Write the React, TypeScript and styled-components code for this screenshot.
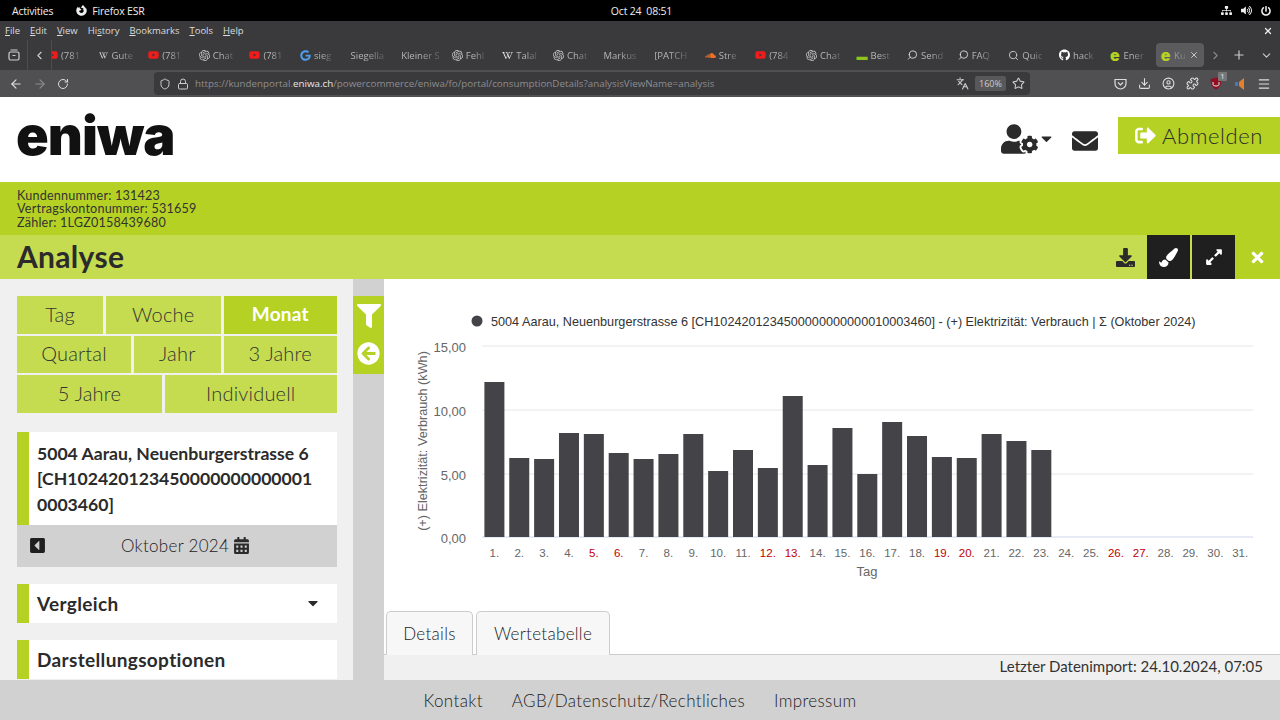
import React from 'react';
import styled, { createGlobalStyle } from 'styled-components';
import {
  FaCalendarAlt,
  FaCaretDown,
  FaCaretSquareLeft,
  FaDownload,
  FaEnvelope,
  FaExpandAlt,
  FaFilter,
  FaFirefoxBrowser,
  FaGithub,
  FaGoogle,
  FaPaintBrush,
  FaPowerOff,
  FaSignOutAlt,
  FaSitemap,
  FaSoundcloud,
  FaTimes,
  FaUserCog,
  FaArrowCircleLeft,
  FaVolumeUp,
  FaWikipediaW,
  FaYoutube,
} from 'react-icons/fa';
import { SiOpenai } from 'react-icons/si';
import {
  ArrowLeft,
  ArrowRight,
  ChevronDown,
  ChevronLeft,
  ChevronRight,
  CircleUser,
  Download,
  Languages,
  Lock,
  Menu,
  Plus,
  Puzzle,
  RotateCw,
  Search,
  Shield,
  Star,
  X,
} from 'lucide-react';

const GREEN = '#b5d224';
const LIGHT_GREEN = '#c5dc50';
const GREY = '#d1d1d1';
const PALE = '#f0f0f0';
const INK = '#2b2b2b';

const GlobalStyle = createGlobalStyle`
  html, body {
    margin: 0;
    padding: 0;
    height: 720px;
    overflow: hidden;
    background: #fff;
    font-family: "Lato", "Liberation Sans", sans-serif;
  }
  * { box-sizing: border-box; }
`;

const Screen = styled.div`
  width: 1280px;
  height: 720px;
  display: flex;
  flex-direction: column;
  overflow: hidden;
`;

/* desktop + browser chrome */
const SystemBar = styled.div`
  height: 21px;
  background: #000;
  color: #eee;
  font: 500 10.5px "Open Sans", sans-serif;
  letter-spacing: -0.2px;
  display: grid;
  grid-template-columns: 1fr auto 1fr;
  align-items: center;
  padding: 0 9px 0 12px;
`;

const SystemLeft = styled.div`
  display: flex;
  align-items: center;
`;

const FirefoxName = styled.span`
  display: flex;
  align-items: center;
  gap: 5px;
  margin-left: 23px;
`;

const SystemRight = styled.div`
  display: flex;
  justify-content: flex-end;
  align-items: center;
  gap: 9px;
`;

const MenuBar = styled.div`
  height: 19px;
  background: #3a3a3c;
  color: #ddd;
  font: 9.5px "Open Sans", sans-serif;
  display: flex;
  align-items: center;
  gap: 10px;
  padding: 0 7px 0 5px;
`;

const MenuItem = styled.span`
  u { text-underline-offset: 1px; }
`;

const MenuClose = styled.span`
  margin-left: auto;
  display: flex;
  color: #eee;
`;

const TabBar = styled.div`
  height: 30px;
  background: #3a3a3c;
  color: #b5b5b5;
  display: flex;
  align-items: center;
  font: 9.5px "Open Sans", sans-serif;
`;

const TabTool = styled.div<{ $w: number }>`
  width: ${p => p.$w}px;
  height: 100%;
  flex: none;
  display: flex;
  align-items: center;
  justify-content: center;
  color: #cfcfcf;
  border-right: 1px solid #4d4d50;
`;

// the strip is scrolled a little, so its first tab sits half under the edge
const TabStrip = styled.div`
  width: 1152px;
  flex: none;
  overflow: hidden;
  display: flex;
  align-items: center;
  height: 100%;
`;

const BrowserTab = styled.div<{ $first?: boolean }>`
  width: 50.6px;
  flex: none;
  margin-left: ${p => (p.$first ? -6 : 0)}px;
  display: flex;
  align-items: center;
  gap: 3px;
  padding-left: 1px;
  white-space: nowrap;
`;

const TabLabel = styled.span`
  -webkit-mask-image: linear-gradient(to right, #000 45%, rgba(0, 0, 0, 0.25) 100%);
  mask-image: linear-gradient(to right, #000 45%, rgba(0, 0, 0, 0.25) 100%);
`;

const ActiveTab = styled.div`
  width: 48px;
  height: 24px;
  margin-left: -3px;
  flex: none;
  border-radius: 4px;
  background: #5b5b5e;
  display: flex;
  align-items: center;
  gap: 3px;
  padding-left: 4px;
  color: #999;
`;

const ActiveClose = styled.span`
  margin-left: auto;
  margin-right: 5px;
  display: flex;
  color: #ddd;
`;

const TabRest = styled.div`
  flex: 1;
  display: flex;
  align-items: center;
  color: #ccc;
`;

const Favicon = styled.span<{ $color?: string }>`
  width: 11px;
  height: 11px;
  flex: none;
  display: flex;
  align-items: center;
  justify-content: center;
  font-size: 11px;
  color: ${p => p.$color || '#ddd'};
`;

const EFavicon = styled.span`
  font: 900 16px/11px "Inter", sans-serif;
  color: ${GREEN};
`;

const NavBar = styled.div`
  height: 27px;
  background: #505053;
  display: flex;
  align-items: center;
  color: #ddd;
  padding-left: 9px;
`;

const NavButtons = styled.div`
  width: 145px;
  flex: none;
  display: flex;
  align-items: center;
  gap: 10px;
`;

const UrlBox = styled.div`
  width: 876px;
  height: 23px;
  flex: none;
  background: #3a3a3c;
  border-radius: 4px;
  display: flex;
  align-items: center;
  padding: 0 5px 0 5px;
  gap: 6px;
  font: 9.8px "Open Sans", sans-serif;
  color: #8d8d90;
`;

const UrlText = styled.span`
  flex: 1;
  white-space: nowrap;
  b { color: #e8e8e8; font-weight: 400; }
`;

const ZoomChip = styled.span`
  width: 31px;
  height: 15px;
  background: #58585b;
  border-radius: 2px;
  font-size: 9px;
  line-height: 15px;
  text-align: center;
  color: #ccc;
`;

const NavRight = styled.div`
  flex: 1;
  display: flex;
  align-items: center;
  justify-content: flex-end;
  gap: 10px;
  padding-right: 9px;
`;

const NavSlot = styled.span`
  width: 14px;
  height: 14px;
  display: flex;
  align-items: center;
  justify-content: center;
  position: relative;
`;

const AddonBadge = styled.span`
  position: absolute;
  top: -5px;
  right: -4px;
  width: 9px;
  height: 9px;
  background: #77777a;
  border-radius: 1px;
  font: 7px/9px "Open Sans", sans-serif;
  text-align: center;
  color: #eee;
`;

/* portal page */
const Header = styled.header`
  height: 85px;
  flex: none;
  background: #fff;
  display: flex;
  align-items: center;
  padding: 0 0 8px 16px;
`;

const Logo = styled.div`
  font: 900 54px/1 "Inter", sans-serif;
  letter-spacing: -0.9px;
  color: #111;
  margin-top: 1px;
`;

const HeaderIcons = styled.div`
  margin-left: auto;
  display: flex;
  align-items: center;
  color: ${INK};
`;

const UserMenu = styled.div`
  display: flex;
  align-items: center;
  margin-right: 17px;
  margin-top: 6px;
`;

const LogoutButton = styled.div`
  width: 162px;
  height: 37px;
  margin-left: 20px;
  background: ${GREEN};
  display: flex;
  align-items: center;
  padding-left: 17px;
  gap: 6px;
  font-size: 22px;
  font-weight: 300;
  letter-spacing: 0.6px;
  color: ${INK};
  svg { color: #fff; }
`;

const CustomerBand = styled.div`
  height: 53px;
  flex: none;
  background: ${GREEN};
  padding: 6.5px 17px;
  font-size: 12.6px;
  line-height: 13.7px;
  letter-spacing: 0.2px;
  color: #333;
`;

const TitleBand = styled.div`
  height: 44px;
  flex: none;
  background: ${LIGHT_GREEN};
  display: flex;
  align-items: center;
  padding: 0 0 2px 17px;
`;

const PageTitle = styled.h1`
  margin: 0;
  font-size: 30px;
  font-weight: 700;
  letter-spacing: 0.3px;
  color: ${INK};
`;

const TitleActions = styled.div`
  margin: 0 0 -2px auto;
  height: 44px;
  display: flex;
  align-items: center;
`;

const SaveIcon = styled.span`
  display: flex;
  margin-right: 10px;
  color: ${INK};
`;

const DarkAction = styled.div`
  width: 43px;
  height: 100%;
  margin-left: 2px;
  background: #1f1f1f;
  color: #fff;
  display: flex;
  align-items: center;
  justify-content: center;
`;

const CloseAction = styled.div`
  width: 45px;
  height: 100%;
  background: ${GREEN};
  color: #fff;
  display: flex;
  align-items: center;
  justify-content: center;
`;

const Body = styled.div`
  flex: 1;
  min-height: 0;
  display: flex;
`;

const Sidebar = styled.aside`
  width: 353px;
  flex: none;
  background: ${PALE};
  padding: 17px 16px 0 17px;
  overflow: hidden;
`;

const RangeRow = styled.div`
  display: flex;
  gap: 2.5px;
  margin-bottom: 2.2px;
`;

const RangeButton = styled.div<{ $w: number; $active?: boolean }>`
  width: ${p => p.$w}px;
  height: 37.5px;
  flex: none;
  padding-bottom: 2px;
  background: ${p => (p.$active ? GREEN : LIGHT_GREEN)};
  color: ${p => (p.$active ? '#fff' : '#333')};
  font-size: ${p => (p.$active ? 19 : 20)}px;
  font-weight: ${p => (p.$active ? 700 : 300)};
  letter-spacing: 0.2px;
  display: flex;
  align-items: center;
  justify-content: center;
`;

const Card = styled.div<{ $gap: number }>`
  margin-top: ${p => p.$gap}px;
  background: #fff;
  border-left: 12px solid ${GREEN};
  display: flex;
  align-items: center;
  justify-content: space-between;
  padding: 0 16px 0 8px;
  height: 39px;
  flex: none;
  font-size: 19px;
  font-weight: 700;
  letter-spacing: 0.35px;
  color: ${INK};
`;

const AddressCard = styled.div`
  margin-top: 19px;
  height: 93px;
  background: #fff;
  border-left: 12px solid ${GREEN};
  padding: 9px 0 0 8px;
  font-size: 17.6px;
  font-weight: 700;
  line-height: 25.5px;
  color: ${INK};
`;

const DateRow = styled.div`
  height: 42px;
  background: ${GREY};
  display: flex;
  align-items: center;
  padding-left: 12px;
  font-size: 17px;
  font-weight: 300;
  letter-spacing: 0.3px;
  color: #222;
`;

const DateLabel = styled.span`
  display: flex;
  align-items: center;
  gap: 4px;
  margin-left: 75px;
`;

const Strip = styled.div`
  width: 31px;
  flex: none;
  background: ${GREY};
  padding-top: 17px;
`;

const StripBox = styled.div`
  height: 78px;
  background: ${GREEN};
  color: #fff;
  display: flex;
  flex-direction: column;
  align-items: center;
  padding-top: 8px;
  gap: 14px;
`;

const Main = styled.main`
  flex: 1;
  min-width: 0;
  display: flex;
  flex-direction: column;
  background: #fff;
`;

const ChartSvg = styled.svg`
  display: block;
  width: 896px;
  height: 332px;
  flex: none;
  font-family: "Liberation Sans", Arial, sans-serif;
`;

const DetailTabs = styled.div`
  height: 44px;
  flex: none;
  display: flex;
  gap: 3px;
  padding-left: 2px;
  border-bottom: 1px solid #ccc;
`;

const DetailTab = styled.div<{ $w: number }>`
  width: ${p => p.$w}px;
  height: 44px;
  background: #f7f7f7;
  border: 1px solid #ccc;
  border-bottom: none;
  border-radius: 5px 5px 0 0;
  display: flex;
  align-items: center;
  justify-content: center;
  font-size: 17px;
  font-weight: 300;
  letter-spacing: 0.3px;
  color: #222;
`;

const ImportLine = styled.div`
  flex: 1;
  background: ${PALE};
  display: flex;
  align-items: center;
  justify-content: flex-end;
  padding: 0 17px 3px 0;
  font-size: 15px;
  color: #333;
`;

const Footer = styled.footer`
  height: 40px;
  flex: none;
  background: ${GREY};
  display: flex;
  align-items: center;
  justify-content: center;
  gap: 29px;
  font-size: 17px;
  font-weight: 300;
  letter-spacing: 0.35px;
  color: #222;
`;

type FavKind = 'yt' | 'book' | 'chat' | 'google' | 'none' | 'wiki' | 'cloud' | 'pill' | 'q' | 'doc' | 'git' | 'e';

// labels as far as the narrow tabs show them
const browserTabs: { kind: FavKind; label: string }[] = [
  { kind: 'yt', label: '(781' },
  { kind: 'book', label: 'Gute' },
  { kind: 'yt', label: '(781' },
  { kind: 'chat', label: 'Chat' },
  { kind: 'yt', label: '(781' },
  { kind: 'google', label: 'sieg' },
  { kind: 'none', label: 'Siegella' },
  { kind: 'none', label: 'Kleiner S' },
  { kind: 'chat', label: 'Fehl' },
  { kind: 'wiki', label: 'Talal' },
  { kind: 'chat', label: 'Chat' },
  { kind: 'none', label: 'Markus' },
  { kind: 'none', label: '[PATCH' },
  { kind: 'cloud', label: 'Stre' },
  { kind: 'yt', label: '(784' },
  { kind: 'chat', label: 'Chat' },
  { kind: 'pill', label: 'Best' },
  { kind: 'q', label: 'Send' },
  { kind: 'q', label: 'FAQ' },
  { kind: 'doc', label: 'Quic' },
  { kind: 'git', label: 'hack' },
  { kind: 'e', label: 'Ener' },
];

const menuItems = [
  ['', 'F', 'ile'],
  ['', 'E', 'dit'],
  ['', 'V', 'iew'],
  ['Hi', 's', 'tory'],
  ['', 'B', 'ookmarks'],
  ['', 'T', 'ools'],
  ['', 'H', 'elp'],
];

const TabIcon: React.FC<{ kind: FavKind }> = ({ kind }) => {
  switch (kind) {
    case 'yt':
      return <Favicon $color="#f01c1c"><FaYoutube size={12} /></Favicon>;
    case 'book':
      return <Favicon $color="#eee"><FaWikipediaW size={9} /></Favicon>;
    case 'chat':
      return <Favicon $color="#c9c9c9"><SiOpenai size={11} /></Favicon>;
    case 'google':
      return <Favicon $color="#4f9df0"><FaGoogle size={11} /></Favicon>;
    case 'wiki':
      return <Favicon $color="#eee"><FaWikipediaW size={11} /></Favicon>;
    case 'cloud':
      return <Favicon $color="#f26f23"><FaSoundcloud size={13} /></Favicon>;
    case 'pill':
      return <Favicon $color="#8fc31f">▬</Favicon>;
    case 'q':
      return <Favicon><Search size={12} style={{ transform: 'scaleX(-1)' }} /></Favicon>;
    case 'doc':
      return <Favicon $color="#ccc"><Search size={11} /></Favicon>;
    case 'git':
      return <Favicon $color="#fff"><FaGithub size={12} /></Favicon>;
    case 'e':
      return <Favicon><EFavicon>e</EFavicon></Favicon>;
    default:
      return null;
  }
};

// pixel y of each bar's top, read off the chart
const barTops = [382, 458, 459, 433, 434, 453, 459, 454, 434, 471, 450, 468, 396, 465, 428, 474, 422, 436, 457, 458, 434, 441, 450];
const weekend = [5, 6, 12, 13, 19, 20, 26, 27];
const yTicks = [
  { y: 346, label: '15,00' },
  { y: 410, label: '10,00' },
  { y: 474, label: '5,00' },
  { y: 537, label: '0,00' },
];
const dayX = (i: number) => 494.4 + i * 24.86;

const ConsumptionChart: React.FC = () => (
  <ChartSvg viewBox="384 279 896 332">
    <circle cx={477} cy={321} r={5.5} fill="#434348" />
    <text x={491} y={325.5} fontSize={12.66} fill="#333">
      5004 Aarau, Neuenburgerstrasse 6 [CH1024201234500000000000010003460] - (+) Elektrizität: Verbrauch | Σ (Oktober 2024)
    </text>
    {yTicks.map(t => (
      <g key={t.label}>
        <line x1={482} x2={1253} y1={t.y} y2={t.y} stroke={t.y === 537 ? '#ccd6eb' : '#e6e6e6'} />
        <text x={466} y={t.y + 5.5} fontSize={13} fill="#666" textAnchor="end">{t.label}</text>
      </g>
    ))}
    <text
      transform="translate(427 441) rotate(-90)"
      fontSize={12.66}
      fill="#666"
      textAnchor="middle"
    >
      (+) Elektrizität: Verbrauch (kWh)
    </text>
    {barTops.map((top, i) => (
      <rect key={i} x={dayX(i) - 10} y={top} width={20} height={537 - top} fill="#434348" />
    ))}
    {Array.from({ length: 31 }, (_, i) => (
      <text
        key={i}
        x={dayX(i)}
        y={557}
        fontSize={11.5}
        textAnchor="middle"
        fill={weekend.includes(i + 1) ? '#c00000' : '#666'}
      >
        {i + 1}.
      </text>
    ))}
    <text x={867} y={576} fontSize={13} fill="#666" textAnchor="middle">Tag</text>
  </ChartSvg>
);

const App: React.FC = () => (
  <Screen>
    <GlobalStyle />
    <SystemBar>
      <SystemLeft>
        Activities
        <FirefoxName><FaFirefoxBrowser size={11} /> Firefox ESR</FirefoxName>
      </SystemLeft>
      <span>Oct 24&nbsp;&nbsp;08:51</span>
      <SystemRight>
        <FaSitemap size={11} />
        <FaVolumeUp size={11} />
        <FaPowerOff size={10} />
      </SystemRight>
    </SystemBar>

    <MenuBar>
      {menuItems.map(([before, key, after]) => (
        <MenuItem key={key + after}>{before}<u>{key}</u>{after}</MenuItem>
      ))}
      <MenuClose><X size={10} strokeWidth={3} /></MenuClose>
    </MenuBar>

    <TabBar>
      <TabTool $w={28}>
        <svg width="12" height="12" viewBox="0 0 12 12" fill="none" stroke="currentColor" strokeWidth="1.2">
          <rect x="1" y="3" width="10" height="8" rx="1.5" />
          <path d="M2.5 1h7M4.5 6.5h3" />
        </svg>
      </TabTool>
      <TabTool $w={24}><ChevronLeft size={13} /></TabTool>
      <TabStrip>
        {browserTabs.map((t, i) => (
          <BrowserTab key={i} $first={i === 0}>
            <TabIcon kind={t.kind} />
            <TabLabel>{t.label}</TabLabel>
          </BrowserTab>
        ))}
        <ActiveTab>
          <Favicon><EFavicon>e</EFavicon></Favicon>
          <TabLabel>Ku</TabLabel>
          <ActiveClose><X size={10} /></ActiveClose>
        </ActiveTab>
      </TabStrip>
      <TabRest>
        <ChevronRight size={13} color="#888" style={{ marginLeft: 5 }} />
        <Plus size={14} style={{ marginLeft: 10 }} />
        <ChevronDown size={13} style={{ marginLeft: 14 }} />
      </TabRest>
    </TabBar>

    <NavBar>
      <NavButtons>
        <ArrowLeft size={14} />
        <ArrowRight size={14} color="#8c8c8c" />
        <RotateCw size={12} />
      </NavButtons>
      <UrlBox>
        <Shield size={12} color="#ccc" />
        <Lock size={12} color="#ccc" />
        <UrlText>https://kundenportal.<b>eniwa.ch</b>/powercommerce/eniwa/fo/portal/consumptionDetails?analysisViewName=analysis</UrlText>
        <Languages size={13} color="#ccc" />
        <ZoomChip>160%</ZoomChip>
        <Star size={13} color="#ccc" />
      </UrlBox>
      <NavRight>
        <NavSlot>
          <svg width="13" height="12" viewBox="0 0 13 12" fill="none" stroke="currentColor" strokeWidth="1.2">
            <path d="M1 1.500h11v4a5.500 5.500 0 0 1-11 0z" />
            <path d="M4 4.500l2.500 2.500L9 4.500" />
          </svg>
        </NavSlot>
        <NavSlot><Download size={13} /></NavSlot>
        <NavSlot><CircleUser size={13} /></NavSlot>
        <NavSlot><Puzzle size={13} /></NavSlot>
        <NavSlot>
          <svg width="12" height="13" viewBox="0 0 12 13">
            <path d="M6 0.500 11.500 2c0 5-1.500 8.500-5.500 10.500C2 10.500.5 7 .5 2z" fill="#8f1024" />
            <path d="M3 5v2.500c0 2 6 2 6 0V5" fill="none" stroke="#eee" strokeWidth="1" />
          </svg>
          <AddonBadge>1</AddonBadge>
        </NavSlot>
        <NavSlot>
          <svg width="12" height="14" viewBox="0 0 12 14">
            <path d="M1 5h3v4H1z" fill="#4a78c0" />
            <path d="M5 5 10 1v12L5 9z" fill="#e0812c" />
          </svg>
        </NavSlot>
        <NavSlot><Menu size={14} /></NavSlot>
      </NavRight>
    </NavBar>

    <Header>
      <Logo>eniwa</Logo>
      <HeaderIcons>
        <UserMenu>
          <FaUserCog size={37} style={{ width: 37, height: 30 }} />
          <FaCaretDown size={17} />
        </UserMenu>
        <FaEnvelope size={26} style={{ marginTop: 10 }} />
        <LogoutButton>
          <FaSignOutAlt size={21} />
          Abmelden
        </LogoutButton>
      </HeaderIcons>
    </Header>

    <CustomerBand>
      Kundennummer: 131423<br />
      Vertragskontonummer: 531659<br />
      Zähler: 1LGZ0158439680
    </CustomerBand>

    <TitleBand>
      <PageTitle>Analyse</PageTitle>
      <TitleActions>
        <SaveIcon><FaDownload size={19} /></SaveIcon>
        <DarkAction><FaPaintBrush size={19} /></DarkAction>
        <DarkAction><FaExpandAlt size={18} /></DarkAction>
        <CloseAction><FaTimes size={17} /></CloseAction>
      </TitleActions>
    </TitleBand>

    <Body>
      <Sidebar>
        <RangeRow>
          <RangeButton $w={86}>Tag</RangeButton>
          <RangeButton $w={115.5}>Woche</RangeButton>
          <RangeButton $w={113.5} $active>Monat</RangeButton>
        </RangeRow>
        <RangeRow>
          <RangeButton $w={114}>Quartal</RangeButton>
          <RangeButton $w={87.5}>Jahr</RangeButton>
          <RangeButton $w={113.5}>3 Jahre</RangeButton>
        </RangeRow>
        <RangeRow>
          <RangeButton $w={145}>5 Jahre</RangeButton>
          <RangeButton $w={172.5}>Individuell</RangeButton>
        </RangeRow>
        <AddressCard>
          5004 Aarau, Neuenburgerstrasse 6<br />
          [CH102420123450000000000001<br />
          0003460]
        </AddressCard>
        <DateRow>
          <FaCaretSquareLeft size={17} color="#1f1f1f" />
          <DateLabel>
            Oktober 2024 <FaCalendarAlt size={17} color="#2b2b2b" />
          </DateLabel>
        </DateRow>
        <Card $gap={17}>
          Vergleich
          <FaCaretDown size={16} />
        </Card>
        <Card $gap={17}>Darstellungsoptionen</Card>
      </Sidebar>

      <Strip>
        <StripBox>
          <FaFilter size={24} />
          <FaArrowCircleLeft size={23} />
        </StripBox>
      </Strip>

      <Main>
        <ConsumptionChart />
        <DetailTabs>
          <DetailTab $w={87}>Details</DetailTab>
          <DetailTab $w={134}>Wertetabelle</DetailTab>
        </DetailTabs>
        <ImportLine>Letzter Datenimport: 24.10.2024, 07:05</ImportLine>
      </Main>
    </Body>

    <Footer>
      <span>Kontakt</span>
      <span>AGB/Datenschutz/Rechtliches</span>
      <span>Impressum</span>
    </Footer>
  </Screen>
);

export default App;
